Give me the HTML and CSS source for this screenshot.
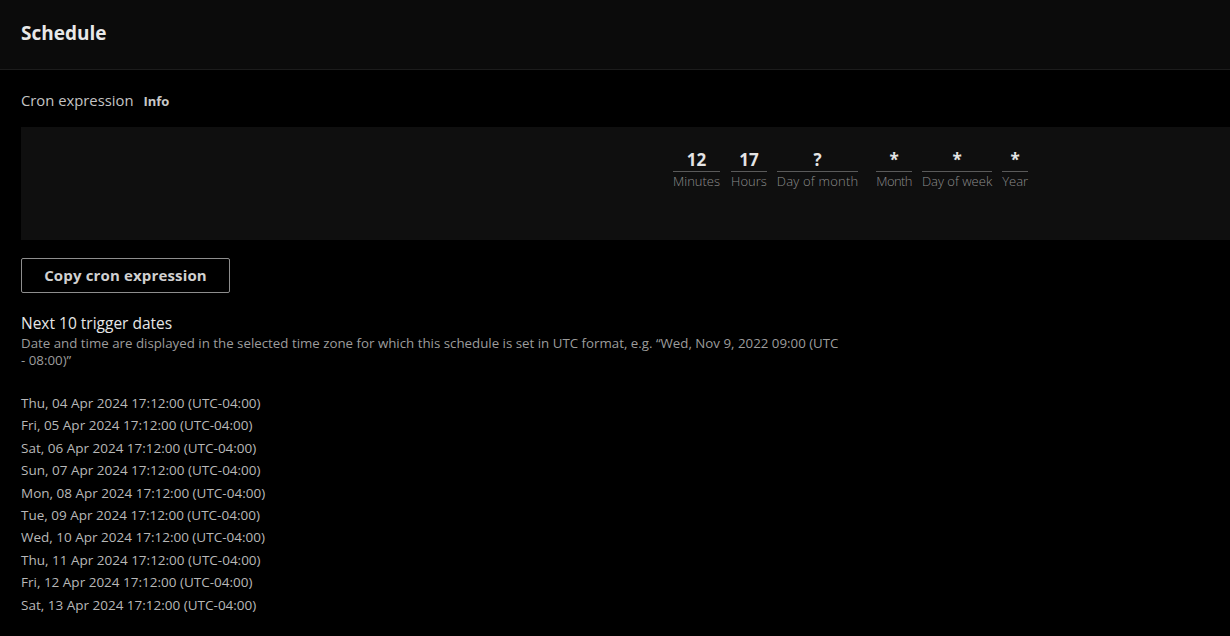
FILE: index.html
```html
<!DOCTYPE html>
<html>
<head>
<meta charset="utf-8">
<link rel="stylesheet" href="styles.css">
</head>
<body>
<div class="page">
  <header class="header">
    <h2 class="title">Schedule</h2>
  </header>
  <section class="content">
    <div class="label-row">
      <span class="label">Cron expression</span>
      <span class="info">Info</span>
    </div>
    <div class="cron-box">
      <div class="fields">
        <div class="field f-min"><span class="value">12</span><span class="name">Minutes</span></div>
        <div class="field f-hour"><span class="value">17</span><span class="name">Hours</span></div>
        <div class="field f-dom"><span class="value">?</span><span class="name">Day of month</span></div>
        <div class="field f-mon"><span class="value">*</span><span class="name">Month</span></div>
        <div class="field f-dow"><span class="value">*</span><span class="name">Day of week</span></div>
        <div class="field f-year"><span class="value">*</span><span class="name">Year</span></div>
      </div>
    </div>
    <button class="btn">Copy cron expression</button>
    <div class="next">
      <div class="next-title">Next 10 trigger dates</div>
      <p class="desc">Date and time are displayed in the selected time zone for which this schedule is set in UTC format, e.g. “Wed, Nov 9, 2022 09:00 (UTC - 08:00)”</p>
      <ul class="dates">
        <li>Thu, 04 Apr 2024 17:12:00 (UTC-04:00)</li>
        <li>Fri, 05 Apr 2024 17:12:00 (UTC-04:00)</li>
        <li>Sat, 06 Apr 2024 17:12:00 (UTC-04:00)</li>
        <li>Sun, 07 Apr 2024 17:12:00 (UTC-04:00)</li>
        <li>Mon, 08 Apr 2024 17:12:00 (UTC-04:00)</li>
        <li>Tue, 09 Apr 2024 17:12:00 (UTC-04:00)</li>
        <li>Wed, 10 Apr 2024 17:12:00 (UTC-04:00)</li>
        <li>Thu, 11 Apr 2024 17:12:00 (UTC-04:00)</li>
        <li>Fri, 12 Apr 2024 17:12:00 (UTC-04:00)</li>
        <li>Sat, 13 Apr 2024 17:12:00 (UTC-04:00)</li>
      </ul>
    </div>
  </section>
</div>
</body>
</html>
```
FILE: styles.css
```css
html, body {
  margin: 0;
  padding: 0;
  background: #000;
  overflow: hidden;
}
body {
  font-family: "Open Sans", "Noto Sans", sans-serif;
  color: #c6c6c6;
  width: 1230px;
  height: 636px;
}
.header {
  height: 70px;
  background: #0b0b0b;
  border-bottom: 1px solid #1c1c1c;
  box-sizing: border-box;
  display: flex;
  align-items: center;
  padding: 0 21px 4px;
}
.title {
  margin: 0;
  font-size: 19px;
  font-weight: 700;
  color: #e8e8e8;
}
.content {
  padding: 20px 0 0 21px;
}
.label-row {
  display: flex;
  align-items: baseline;
  gap: 10px;
  height: 20px;
}
.label {
  font-size: 14.8px;
  color: #c4c4c4;
}
.info {
  font-size: 13px;
  font-weight: 700;
  color: #c8c8c8;
}
.cron-box {
  margin-top: 17px;
  height: 113px;
  background: #0f0f0f;
  box-sizing: border-box;
  padding: 22px 0 0 652px;
}
.fields {
  display: flex;
  gap: 10px;
}
.field {
  display: flex;
  flex-direction: column;
  align-items: stretch;
}
.f-hour {
  margin-left: 1px;
}
.f-dom .name {
  letter-spacing: 0.2px;
}
.f-mon {
  margin-left: 8px;
}
.f-mon .name {
  letter-spacing: -0.6px;
}
.value {
  font-size: 17px;
  font-weight: 700;
  color: #e4e4e4;
  text-align: center;
  line-height: 22px;
  border-bottom: 1px solid #5a5a5a;
}
.name {
  font-size: 13px;
  font-weight: 300;
  color: #8c8c8c;
  line-height: 18px;
}
.btn {
  display: block;
  margin-top: 18px;
  height: 35px;
  width: 209px;
  background: #000;
  border: 1px solid #8e8e8e;
  border-radius: 2px;
  font-family: inherit;
  font-size: 15px;
  font-weight: 700;
  letter-spacing: 0.15px;
  color: #d0d0d0;
  padding: 0 0 2px;
}
.next {
  margin-top: 20px;
}
.next-title {
  font-size: 15.5px;
  color: #e6e6e6;
  line-height: 20px;
}
.desc {
  margin: 2px 0 0;
  max-width: 820px;
  font-size: 13.3px;
  line-height: 17px;
  color: #9c9c9c;
}
.dates {
  list-style: none;
  margin: 23px 0 0;
  padding: 0;
}
.dates li {
  font-size: 13.5px;
  line-height: 22.4px;
  color: #b8b8b8;
}
```
